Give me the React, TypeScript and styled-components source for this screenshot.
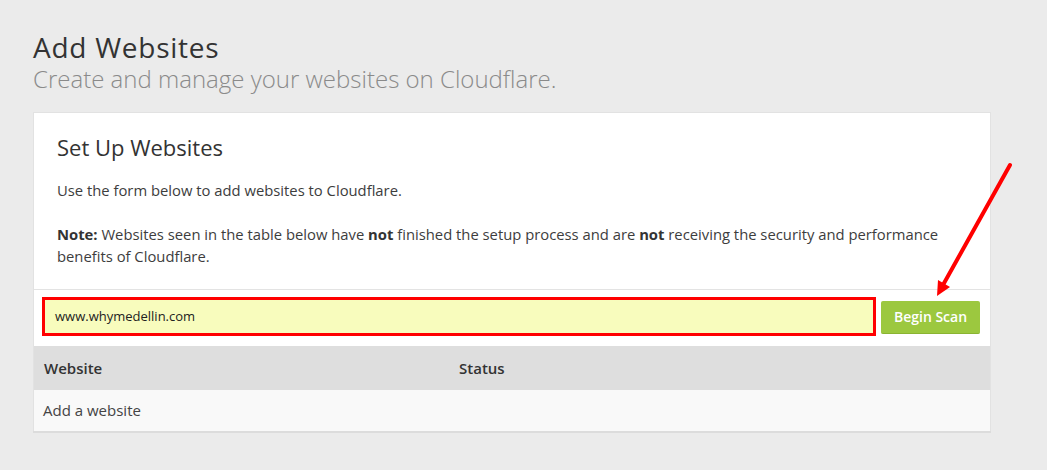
import React from "react";
import styled, { createGlobalStyle } from "styled-components";

const GlobalStyle = createGlobalStyle`
  html, body {
    margin: 0;
    padding: 0;
    background: #ebebeb;
    font-family: "Open Sans", "Liberation Sans", Arial, sans-serif;
    color: #333;
  }
  * { box-sizing: border-box; }
`;

const Page = styled.div`
  position: relative;
  width: 1047px;
  height: 470px;
  padding: 31px 0 0 33px;
  overflow: hidden;
`;

const Title = styled.h1`
  margin: 0;
  font-size: 28px;
  line-height: 32.4px;
  letter-spacing: 0.75px;
  font-weight: 400;
  color: #333;
`;

const Subtitle = styled.p`
  margin: 2px 0 18px;
  font-size: 24px;
  line-height: 28.8px;
  font-weight: 300;
  color: #8a8a8a;
`;

const Card = styled.section`
  width: 958px;
  background: #fff;
  border: 1px solid #e2e2e2;
  border-bottom: none;
  box-shadow: 0 2px 0 #dcdcdc;
`;

const Intro = styled.div`
  padding: 21px 23px 22px;
  border-bottom: 1px solid #e3e3e3;
`;

const CardTitle = styled.h2`
  margin: 0 0 18px;
  font-size: 22px;
  line-height: 26.4px;
  font-weight: 400;
  color: #333;
`;

const Para = styled.p<{ $gap?: boolean }>`
  margin: 0 0 ${(p) => (p.$gap ? "22px" : "0")};
  font-size: 14.8px;
  line-height: 22px;
  color: #3d3d3d;
  b { font-weight: 700; color: #333; }
`;

const FormRow = styled.div`
  display: flex;
  align-items: center;
  gap: 5px;
  padding: 7px 10px 10px 8px;
`;

const DomainInput = styled.div`
  flex: 1;
  height: 39px;
  border: 3px solid #ff0000;
  background: #f8fcbd;
  display: flex;
  align-items: center;
  padding: 0 10px;
  font-size: 13px;
  color: #222;
`;

const ScanButton = styled.button`
  width: 99px;
  height: 33px;
  margin-top: 2px;
  border: none;
  border-bottom: 1px solid #8ab432;
  border-radius: 2px;
  background: #9cc83f;
  color: #fff;
  font-family: inherit;
  font-size: 14px;
  font-weight: 600;
  padding: 0;
`;

const TableHead = styled.div`
  display: grid;
  grid-template-columns: 415px 1fr;
  height: 44px;
  align-items: center;
  padding-left: 10px;
  background: #dedede;
  font-size: 15px;
  font-weight: 600;
  color: #333;
`;

const TableRow = styled.div`
  height: 41px;
  display: flex;
  align-items: center;
  padding-left: 9px;
  background: #f9f9f9;
  font-size: 15px;
  color: #444;
`;

const Overlay = styled.svg`
  position: absolute;
  left: 0;
  top: 0;
  pointer-events: none;
`;

export default function App() {
  return (
    <>
      <GlobalStyle />
      <Page>
        <Title>Add Websites</Title>
        <Subtitle>Create and manage your websites on Cloudflare.</Subtitle>
        <Card>
          <Intro>
            <CardTitle>Set Up Websites</CardTitle>
            <Para $gap>Use the form below to add websites to Cloudflare.</Para>
            <Para>
              <b>Note:</b> Websites seen in the table below have <b>not</b> finished the setup process and are <b>not</b> receiving the security and performance benefits of Cloudflare.
            </Para>
          </Intro>
          <FormRow>
            <DomainInput>www.whymedellin.com</DomainInput>
            <ScanButton>Begin Scan</ScanButton>
          </FormRow>
          <TableHead>
            <span>Website</span>
            <span>Status</span>
          </TableHead>
          <TableRow>Add a website</TableRow>
        </Card>
        <Overlay width="1047" height="470" viewBox="0 0 1047 470">
          <line x1="1010" y1="165" x2="943" y2="285" stroke="#ff0000" strokeWidth="4" strokeLinecap="round" />
          <polygon points="937,296 950,287 938,280" fill="#ff0000" />
        </Overlay>
      </Page>
    </>
  );
}
